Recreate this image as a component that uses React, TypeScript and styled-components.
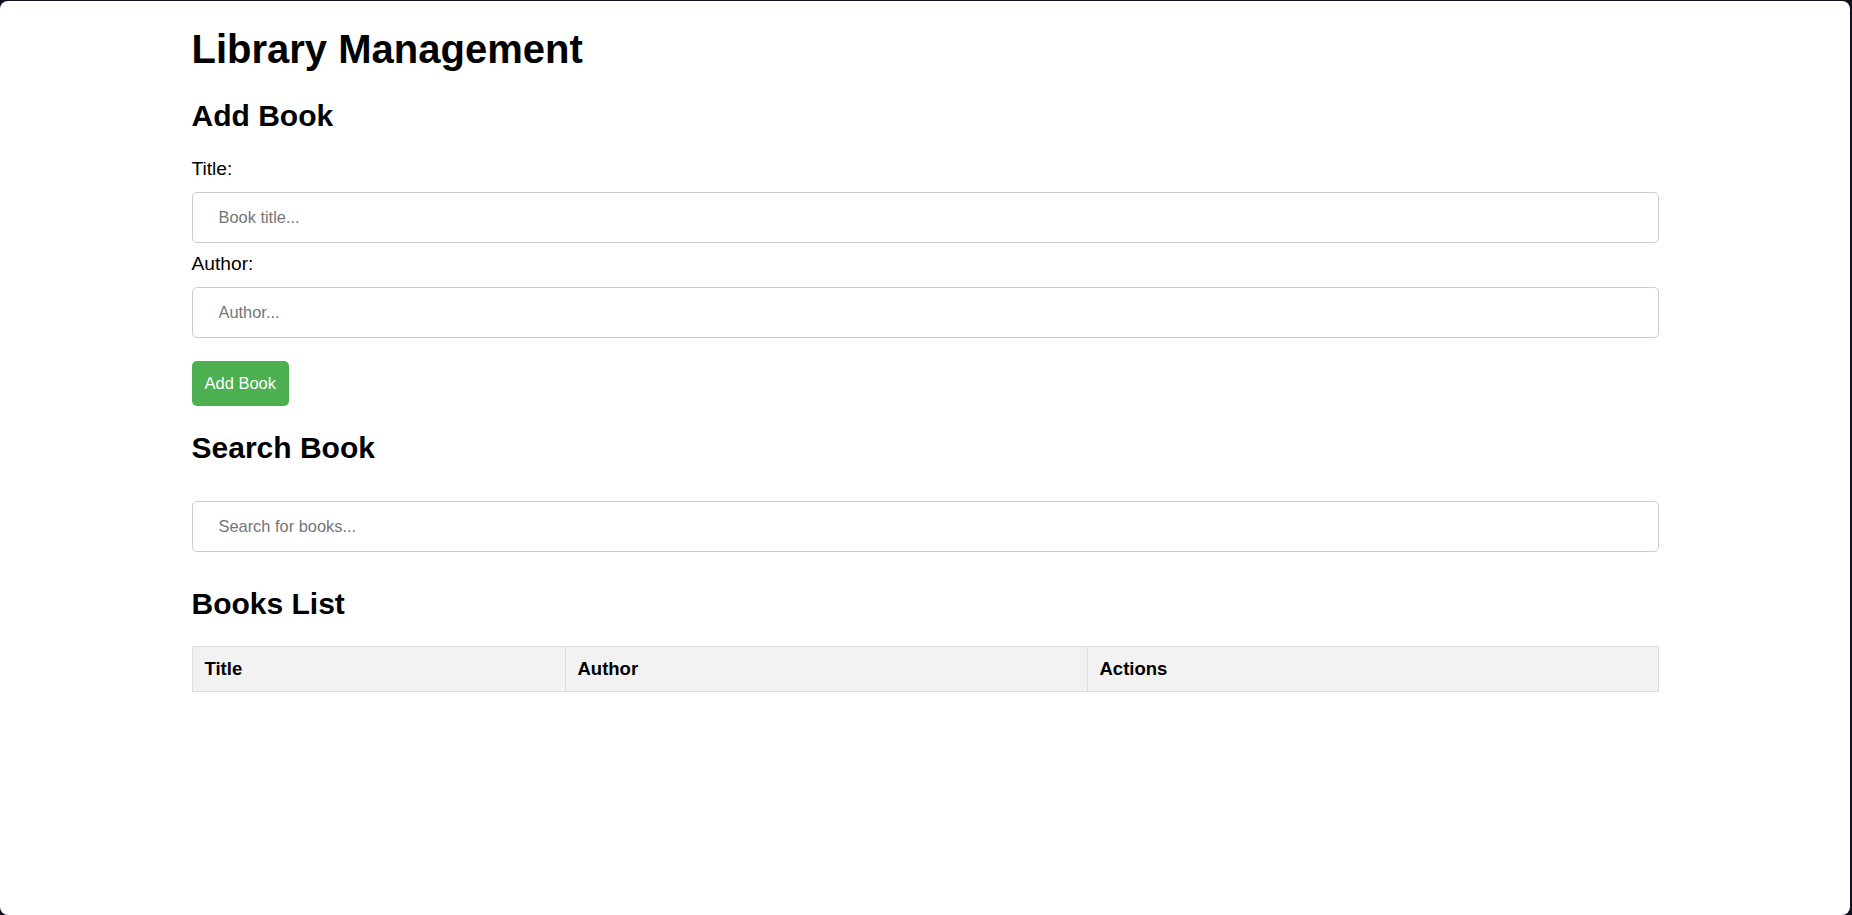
import React from "react";
import styled, { createGlobalStyle } from "styled-components";

const GlobalStyle = createGlobalStyle`
  html, body {
    margin: 0;
    padding: 0;
    background: #10101e;
    font-family: "Liberation Sans", Arial, sans-serif;
  }
  * { box-sizing: border-box; }
`;

const Panel = styled.div`
  background: #ffffff;
  margin: 1px 2px 0 0;
  min-height: 914px;
  border-radius: 8px;
  padding-top: 25px;
`;

const Container = styled.div`
  width: 1467px;
  margin: 0 auto;
  display: flex;
  flex-direction: column;
  color: #000;
`;

const Title = styled.h1`
  margin: 0;
  font-size: 40px;
  line-height: 46px;
  font-weight: 700;
`;

const SectionTitle = styled.h2<{ $top: number; $bottom: number }>`
  margin: ${(p) => p.$top}px 0 ${(p) => p.$bottom}px;
  font-size: 30px;
  line-height: 34px;
  font-weight: 700;
`;

const Label = styled.label`
  display: block;
  font-size: 19.2px;
  line-height: 22px;
  margin-bottom: 12px;
`;

const Field = styled.div`
  display: flex;
  flex-direction: column;
  margin-bottom: 10px;
`;

const Input = styled.input`
  width: 100%;
  height: 51px;
  padding: 0 26px;
  border: 1px solid #cccccc;
  border-radius: 5px;
  font-family: "Liberation Sans", Arial, sans-serif;
  font-size: 16.4px;
  color: #000;
  background: #fff;
  outline: none;
  &::placeholder {
    color: #757575;
  }
`;

const Button = styled.button`
  align-self: flex-start;
  margin-top: 13px;
  height: 45px;
  padding: 0 13px;
  border: none;
  border-radius: 5px;
  background: #4caf50;
  color: #ffffff;
  font-family: "Liberation Sans", Arial, sans-serif;
  font-size: 16.5px;
  cursor: pointer;
`;

const Table = styled.table`
  width: 100%;
  border-collapse: collapse;
  table-layout: fixed;
`;

const Th = styled.th<{ $width?: number }>`
  width: ${(p) => (p.$width ? `${p.$width}px` : "auto")};
  padding: 12px;
  border: 1px solid #dddddd;
  background: #f2f2f2;
  text-align: left;
  font-size: 18.5px;
  line-height: 20px;
  font-weight: 700;
`;

export default function App() {
  return (
    <>
      <GlobalStyle />
      <Panel>
        <Container>
          <Title>Library Management</Title>
          <SectionTitle $top={27} $bottom={25}>Add Book</SectionTitle>
          <Field>
            <Label>Title:</Label>
            <Input placeholder="Book title..." />
          </Field>
          <Field>
            <Label>Author:</Label>
            <Input placeholder="Author..." />
          </Field>
          <Button>Add Book</Button>
          <SectionTitle $top={25} $bottom={36}>Search Book</SectionTitle>
          <Input placeholder="Search for books..." />
          <SectionTitle $top={35} $bottom={25}>Books List</SectionTitle>
          <Table>
            <thead>
              <tr>
                <Th $width={373}>Title</Th>
                <Th $width={522}>Author</Th>
                <Th>Actions</Th>
              </tr>
            </thead>
            <tbody></tbody>
          </Table>
        </Container>
      </Panel>
    </>
  );
}
